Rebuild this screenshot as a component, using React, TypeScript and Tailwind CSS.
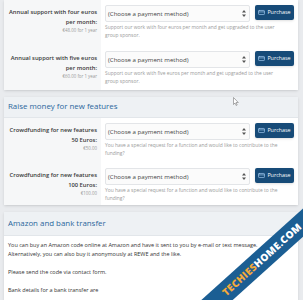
import { CreditCard } from 'lucide-react'

interface Row {
  label: string[]
  price: string
  desc: string
  h: string
}

const supportRows: Row[] = [
  {
    label: ['Annual support with four euros', 'per month:'],
    price: '€48.00 for 1 year',
    desc: 'Support our work with four euros per month and get upgraded to the user group sponsor.',
    h: 'h-[46px]',
  },
  {
    label: ['Annual support with five euros', 'per month:'],
    price: '€60.00 for 1 year',
    desc: 'Support our work with five euros per month and get upgraded to the user group sponsor.',
    h: 'h-[44px]',
  },
]

const featureRows: Row[] = [
  {
    label: ['Crowdfunding for new features', '50 Euros:'],
    price: '€50.00',
    desc: 'You have a special request for a function and would like to contribute to the funding?',
    h: 'h-[45px]',
  },
  {
    label: ['Crowdfunding for new features', '100 Euros:'],
    price: '€100.00',
    desc: 'You have a special request for a function and would like to contribute to the funding?',
    h: 'h-[42px]',
  },
]

function PaymentRow({ row }: { row: Row }) {
  return (
    <div className={`grid grid-cols-[97px_1fr] ${row.h}`}>
      {/* Label */}
      <div className="bg-[#f6f7f8] text-right pr-[4px] pt-[7px]">
        {row.label.map(l => (
          <p key={l} className="whitespace-nowrap text-[5.8px] leading-[10px] font-semibold text-[#3a3a3a]">{l}</p>
        ))}
        <p className="text-[4.4px] leading-[7px] text-[#999]">{row.price}</p>
      </div>

      {/* Select + button */}
      <div className="pl-[4px] pr-[4px] pt-[5px]">
        <div className="flex items-start gap-[5px]">
          <div className="flex-1 h-[17px] flex items-center justify-between pl-[2px] pr-[3px] bg-[#fbfbfb] border border-[#e3e5e8] rounded-[2px]">
            <span className="text-[6.1px] text-[#444]">(Choose a payment method)</span>
            <svg width="4" height="7" viewBox="0 0 4 7">
              <path d="M2 0 L4 2.6 L0 2.6 Z M2 7 L4 4.4 L0 4.4 Z" fill="#555" />
            </svg>
          </div>
          <button className="w-[39px] h-[15px] flex items-center justify-center gap-[2px] bg-[#174b78] rounded-[2px] shadow-sm">
            <CreditCard size={7} strokeWidth={2.5} className="text-[#9cc4ea]" />
            <span className="text-[5.4px] text-white">Purchase</span>
          </button>
        </div>
        <p className="mt-[1px] pr-[8px] text-[4.9px] leading-[8px] text-[#9a9a9a]">{row.desc}</p>
      </div>
    </div>
  )
}

function CardHeader({ title, h }: { title: string; h: string }) {
  return (
    <div className={`${h} flex items-center px-[4px] bg-[#eef1f4] border-b border-[#e2e6ea]`}>
      <h2 className="text-[7.9px] text-[#2c679c]">{title}</h2>
    </div>
  )
}

export default function App() {
  return (
    <div className="relative h-[300px] overflow-hidden bg-[#e9ebee] font-['Open_Sans',sans-serif]">
      <div className="pl-[4px] pr-[5px] flex flex-col gap-[7px]">

        {/* Support */}
        <div className="bg-white shadow-sm">
          {supportRows.map(r => <PaymentRow key={r.price} row={r} />)}
        </div>

        {/* Raise money */}
        <div className="bg-white shadow-sm">
          <CardHeader title="Raise money for new features" h="h-[21px]" />
          {featureRows.map(r => <PaymentRow key={r.price} row={r} />)}
        </div>

        {/* Amazon */}
        <div className="bg-white shadow-sm min-h-[100px]">
          <CardHeader title="Amazon and bank transfer" h="h-[24px]" />
          <div className="px-[4px] pt-[5px] text-[5.5px] leading-[9px] text-[#333]">
            <p className="whitespace-nowrap">You can buy an Amazon code online at Amazon and have it sent to you by e-mail or text message.</p>
            <p className="mb-[9px]">Alternatively, you can also buy it anonymously at REWE and the like.</p>
            <p className="mb-[9px]">Please send the code via contact form.</p>
            <p>Bank details for a bank transfer are</p>
          </div>
        </div>
      </div>

      {/* Cursor */}
      <svg className="absolute left-[233px] top-[97px]" width="6" height="9" viewBox="0 0 6 9">
        <path d="M0.5 0.5 L0.5 7.5 L2 6 L3.2 8.5 L4.2 8 L3 5.5 L5.3 5.5 Z" fill="white" stroke="#777" strokeWidth="0.6" />
      </svg>

      {/* Watermark ribbon */}
      <div className="absolute left-[152px] top-[249px] w-[220px] h-[21px] rotate-[-42deg] bg-[#1b5e93] flex items-center justify-center">
        <span className="text-[10px] font-extrabold tracking-[0.3px] text-[#f2a93b]">TECHIES</span>
        <span className="text-[10px] font-extrabold tracking-[0.3px] text-white">HOME.COM</span>
      </div>
    </div>
  )
}
